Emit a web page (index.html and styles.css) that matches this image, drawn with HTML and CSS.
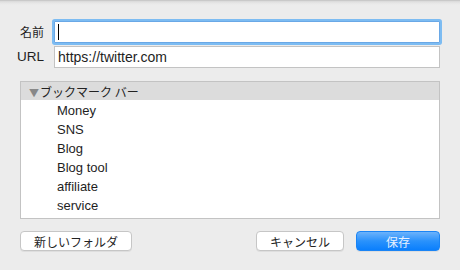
FILE: index.html
```html
<!DOCTYPE html>
<html lang="ja">
<head>
<meta charset="UTF-8">
<title>ブックマークを追加</title>
<link rel="stylesheet" href="styles.css">
</head>
<body>

<!-- bookmark sheet -->
<div class="sheet">
  <div class="field-row">
    <label class="field-label jp">名前</label>
    <div class="field focused"><span class="caret"></span></div>
  </div>
  <div class="field-row">
    <label class="field-label">URL</label>
    <div class="field">https://twitter.com</div>
  </div>

  <div class="folder-list">
    <div class="folder-head jp"><span class="disclosure">▼</span>ブックマーク バー</div>
    <div class="folder">Money</div>
    <div class="folder">SNS</div>
    <div class="folder">Blog</div>
    <div class="folder">Blog tool</div>
    <div class="folder">affiliate</div>
    <div class="folder">service</div>
  </div>

  <div class="actions">
    <button class="btn jp">新しいフォルダ</button>
    <div class="actions-right">
      <button class="btn btn-cancel jp">キャンセル</button>
      <button class="btn btn-primary jp">保存</button>
    </div>
  </div>
</div>

</body>
</html>
```

FILE: styles.css
```css
/* -------- RESET -------- */
*{margin:0;padding:0;box-sizing:border-box}

:root{
  --bg:#ececec;
  --line:#c3c3c3;
  --text:#1e1e1e;
  --focus:#7dbcf2;
}

body{
  width:460px;height:270px;overflow:hidden;
  font-family:"Liberation Sans","Noto Sans CJK JP",sans-serif;
  font-size:13px;color:var(--text);
  background:linear-gradient(#b9b9b9 0,#d9d9d9 1px,#e6e6e6 3px,var(--bg) 5px);
}
.jp{font-family:"Noto Sans CJK JP","Liberation Sans",sans-serif;font-size:12px}

.sheet{padding:21px 20px 0}

/* -------- FIELDS -------- */
.field-row{display:grid;grid-template-columns:24px 386px;column-gap:10px;align-items:center;margin-bottom:3px}
.field-label{justify-self:end;white-space:nowrap;line-height:22px;font-size:13.5px}
.field-label.jp{font-size:12px}
.field{
  height:22px;background:#fff;border:1px solid var(--line);
  padding:0 3px;line-height:20px;display:flex;align-items:center;font-size:14px
}
.field.focused{border-color:#6aa8e6;box-shadow:0 0 0 2px var(--focus);border-radius:1px}
.caret{width:1px;height:16px;background:#000}

/* -------- FOLDER LIST -------- */
.folder-list{
  margin-top:13px;height:138px;background:#fff;border:1px solid var(--line)
}
.folder-head{height:18px;line-height:19px;background:#dcdcdc;padding-left:8px;color:#222}
.disclosure{color:#888;font-size:10px;margin-right:1px}
.folder{height:19px;line-height:21px;padding-left:36px}

/* -------- BUTTONS -------- */
.actions{display:flex;justify-content:space-between;margin-top:12px}
.actions-right{display:flex;gap:12px}
.btn{
  height:20px;border:1px solid #c6c6c6;border-radius:4px;background:#fff;
  color:#222;box-shadow:0 1px 0 rgba(0,0,0,.06);width:112px
}
.btn-cancel{width:88px}
.btn-primary{
  width:84px;border-color:#1a84f5;color:#e8f1ff;
  background:linear-gradient(#6cb2fb,#2a92fc 50%,#0a7ffd)
}
```
